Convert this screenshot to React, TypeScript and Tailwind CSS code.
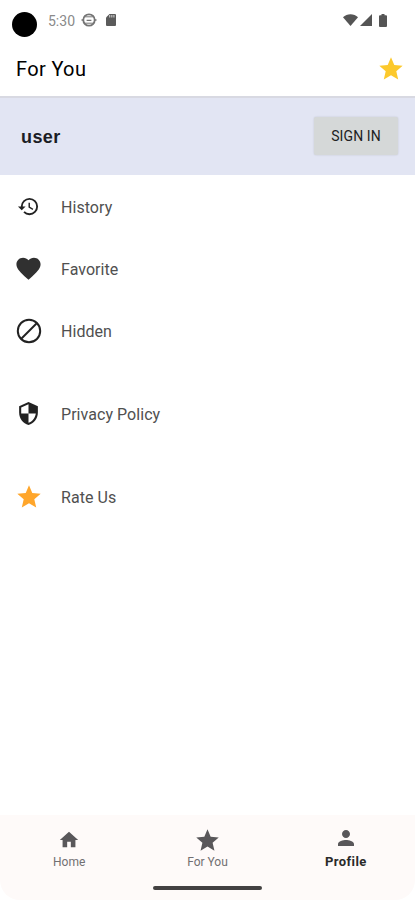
import type { ReactNode } from "react";

const STAR = "M12 17.27 18.18 21l-1.64-7.03L22 9.24l-7.19-.61L12 2 9.19 8.63 2 9.24l5.46 4.73L5.82 21z";
const HISTORY = "M13 3a9 9 0 0 0-9 9H1l3.89 3.89.07.14L9 12H6c0-3.87 3.13-7 7-7s7 3.13 7 7-3.13 7-7 7c-1.93 0-3.68-.79-4.94-2.06l-1.42 1.42A8.95 8.95 0 0 0 13 21a9 9 0 0 0 0-18zm-1 5v5l4.28 2.54.72-1.21-3.5-2.08V8z";
const HEART = "M12 21.35l-1.45-1.32C5.4 15.36 2 12.28 2 8.5 2 5.42 4.42 3 7.5 3c1.74 0 3.41.81 4.5 2.09C13.09 3.81 14.76 3 16.5 3 19.58 3 22 5.42 22 8.5c0 3.78-3.4 6.86-8.55 11.54z";
const SHIELD = "M12 1 3 5v6c0 5.55 3.84 10.74 9 12 5.16-1.26 9-6.45 9-12V5zm0 10.99h7c-.53 4.12-3.28 7.79-7 8.94V12H5V6.3l7-3.11z";
const HOME = "M10 20v-6h4v6h5v-8h3L12 3 2 12h3v8z";
const PERSON = "M12 12c2.21 0 4-1.79 4-4s-1.79-4-4-4-4 1.79-4 4 1.79 4 4 4zm0 2c-2.67 0-8 1.34-8 4v2h16v-2c0-2.66-5.33-4-8-4z";

function Icon({ d, className }: { d: string; className: string }) {
  return (
    <svg viewBox="0 0 24 24" fill="currentColor" className={`shrink-0 ${className}`}>
      <path d={d} />
    </svg>
  );
}

function Row({ icon, label }: { icon: ReactNode; label: string }) {
  return (
    <li className="flex h-[62px] items-center">
      <span className="ml-3 flex w-[33px] justify-center">{icon}</span>
      <span className="ml-4 pt-px text-[16px] leading-6 tracking-[0.05px] text-[#505050]">{label}</span>
    </li>
  );
}

function Tab({ icon, label, active = false }: { icon: ReactNode; label: string; active?: boolean }) {
  return (
    <div className="flex flex-1 flex-col items-center pt-3">
      <span className="flex h-[26px] items-center text-[#59575a]">{icon}</span>
      <span className={active ? "text-[13px] leading-[18px] font-bold tracking-[0.4px] text-[#2a2a2a]" : "text-[12px] leading-[18px] text-[#727072]"}>
        {label}
      </span>
    </div>
  );
}

export default function App() {
  return (
    <div className="flex h-[900px] w-[415px] flex-col overflow-hidden bg-white font-['Roboto',sans-serif]">
      <div className="flex h-[42px] shrink-0 items-start pl-3">
        <span className="mt-3 size-[25px] rounded-full bg-black" />
        <span className="mt-[11px] ml-[11px] text-[14px] leading-5 text-[#8a8a8a]">5:30</span>
        <svg viewBox="0 0 16 16" fill="none" stroke="#747474" className="mt-3 ml-[6px] size-4">
          <circle cx="8" cy="8" r="5.7" strokeWidth="1.8" />
          <path d="M.5 8h2.5m10 0h2.5M5.6 8.4h4.8" strokeWidth="1.4" />
          <path d="M4 4.8h8M4 11.2h8" strokeWidth="1" />
        </svg>
        <svg viewBox="0 0 12 14" className="mt-[13px] ml-2 h-[14px] w-3">
          <path d="M4.5 1H10a1 1 0 0 1 1 1v10a1 1 0 0 1-1 1H2a1 1 0 0 1-1-1V4.5z" fill="#5b5b5b" />
          <path d="M4.7 2v2.5M6.8 2v2.5M8.9 2v2.5" stroke="#c4c4c4" strokeWidth="1.2" />
        </svg>
        <div className="mt-[14px] ml-auto flex gap-[3px] pr-[28px] text-[#555]">
          <svg viewBox="0 0 15 12" fill="currentColor" className="h-3 w-[15px]">
            <path d="M0 3.2C4 -.7 11 -.7 15 3.2L7.5 12z" />
          </svg>
          <svg viewBox="0 0 12 12" fill="currentColor" className="-ml-px h-3 w-3">
            <path d="M12 0v12H0z" />
          </svg>
          <svg viewBox="0 0 8 13" fill="currentColor" className="ml-1 h-[13px] w-2">
            <path d="M2.5 0h3v1.2H7a1 1 0 0 1 1 1V12a1 1 0 0 1-1 1H1a1 1 0 0 1-1-1V2.2a1 1 0 0 1 1-1h1.5z" />
          </svg>
        </div>
      </div>

      <header className="flex h-[54px] shrink-0 items-center justify-between pr-[10px] pl-4">
        <h1 className="text-[20px] leading-6 font-normal tracking-[0.35px] text-black">For You</h1>
        <Icon d={STAR} className="size-7 text-[#fcc92c]" />
      </header>

      <section className="flex h-[79px] shrink-0 items-center justify-between border-t-2 border-[#d8d9e2] bg-[#e2e5f3] pr-[17px] pl-[21px]">
        <span className="pt-px font-['Liberation_Sans',sans-serif] text-[18px] leading-6 font-bold tracking-[0.4px] text-[#1b1c24]">user</span>
        <button className="mb-px h-[38px] w-[84px] rounded-[2px] bg-[#d5d8d8] text-[14px] font-normal tracking-[0.1px] text-[#202222] shadow-[0_0_2px_rgba(0,0,0,0.15)]">
          SIGN IN
        </button>
      </section>

      <ul className="flex-1 pt-px text-[#222]">
        <Row icon={<Icon d={HISTORY} className="mb-px size-[23px]" />} label="History" />
        <Row icon={<Icon d={HEART} className="mb-[2px] size-[29px] text-[#303030]" />} label="Favorite" />
        <Row
          icon={
            <svg viewBox="0 0 26 26" fill="none" stroke="#222" strokeWidth="2" className="size-[26px]">
              <circle cx="13" cy="13" r="11.2" />
              <path d="M5 21 21 5" />
            </svg>
          }
          label="Hidden"
        />
        <li className="h-[21px]" />
        <Row icon={<Icon d={SHIELD} className="mb-px size-[25px]" />} label="Privacy Policy" />
        <li className="h-[21px]" />
        <Row icon={<Icon d={STAR} className="size-7 text-[#ffa62b]" />} label="Rate Us" />
      </ul>

      <nav className="flex h-[85px] shrink-0 flex-col rounded-b-[20px] bg-[#fefaf9]">
        <div className="flex flex-1">
          <Tab icon={<Icon d={HOME} className="size-[22px]" />} label="Home" />
          <Tab icon={<Icon d={STAR} className="size-[27px]" />} label="For You" />
          <Tab icon={<Icon d={PERSON} className="mb-1 size-[24px]" />} label="Profile" active />
        </div>
        <div className="mb-[10px] h-[4px] w-[109px] self-center rounded-full bg-[#434142]" />
      </nav>
    </div>
  );
}
